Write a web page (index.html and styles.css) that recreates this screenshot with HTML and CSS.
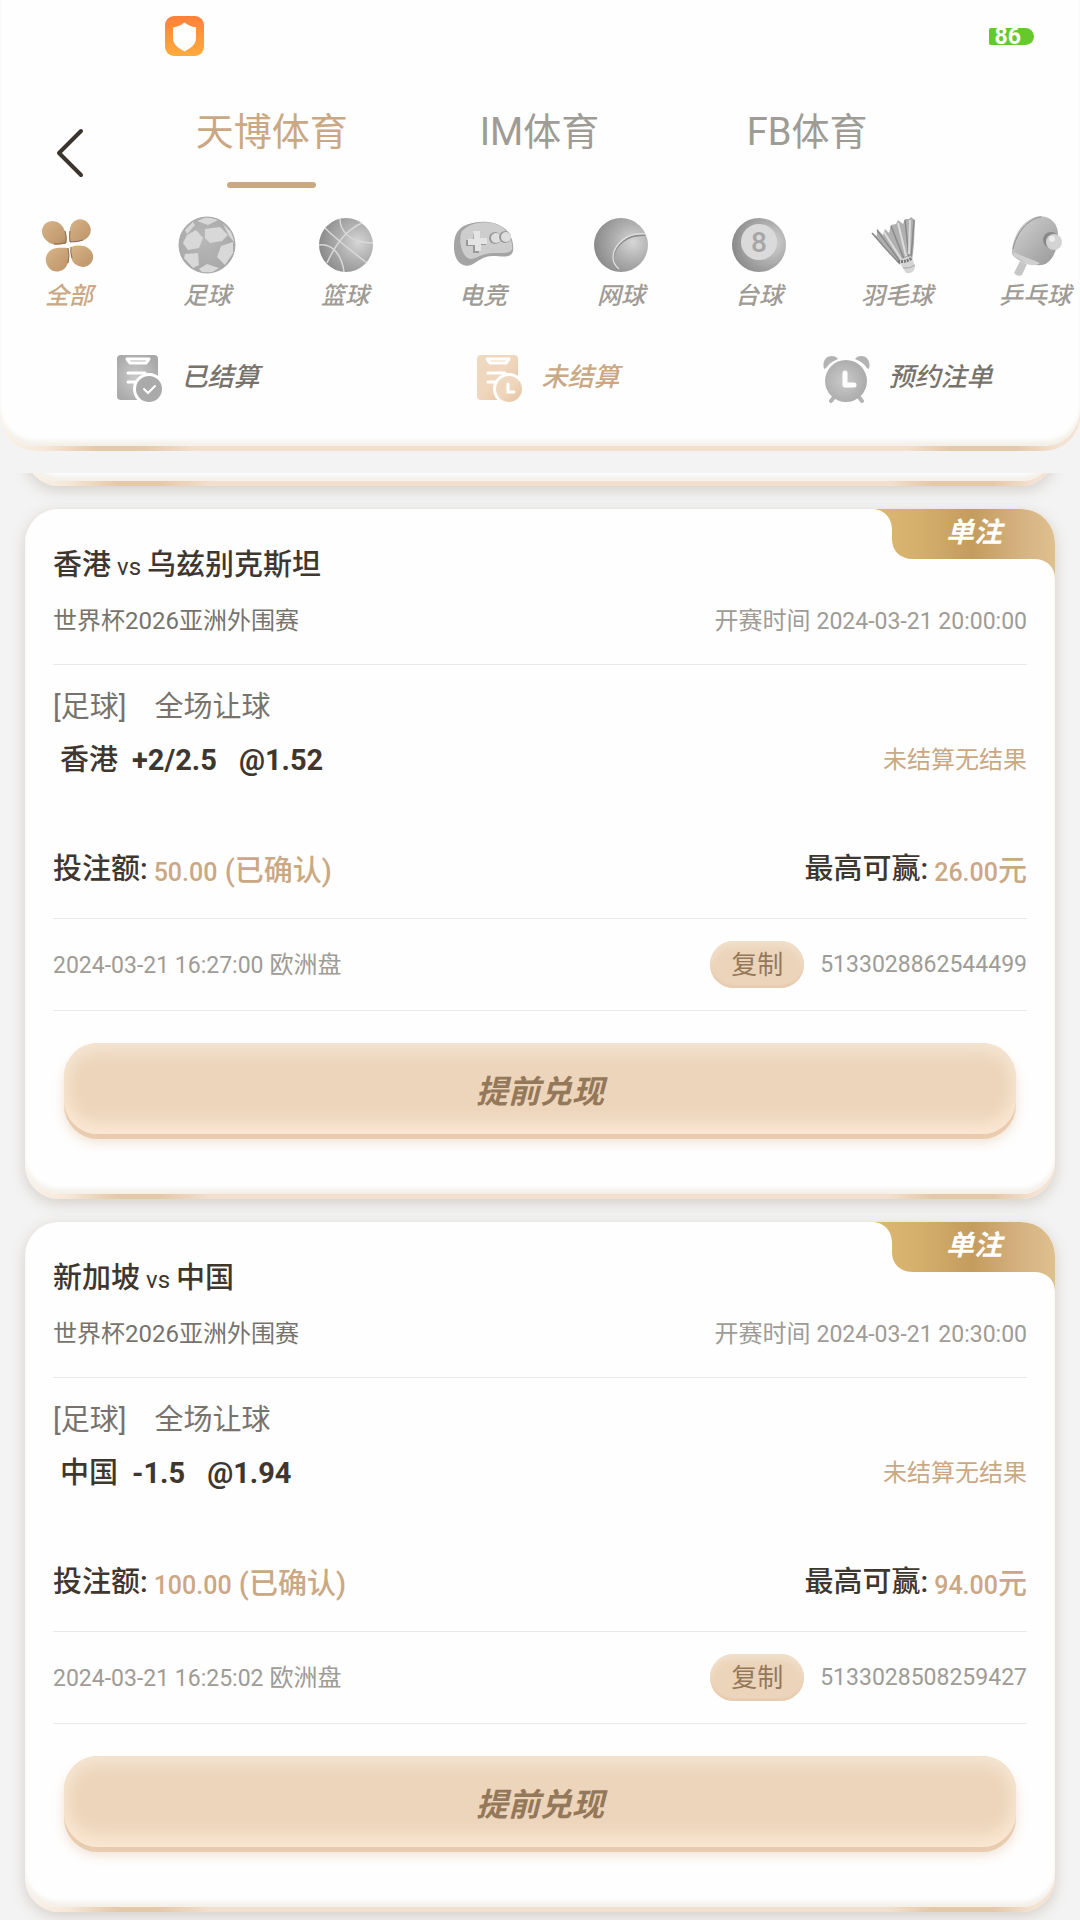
FILE: index.html
```html
<!DOCTYPE html>
<html lang="zh-CN">
<head>
    <meta charset="UTF-8">
    <meta name="viewport" content="width=device-width, initial-scale=1.0">
    <title>投注记录</title>
    <link rel="stylesheet" href="styles.css">
</head>
<body>

<!-- 公用渐变 -->
<svg class="defs" width="0" height="0" aria-hidden="true">
    <defs>
        <linearGradient id="shield" x1="0" y1="0" x2="0" y2="1">
            <stop offset="0" stop-color="#ff803a"/><stop offset="1" stop-color="#ffab3c"/>
        </linearGradient>
        <linearGradient id="petal" x1="0" y1="0" x2="1" y2="1">
            <stop offset="0" stop-color="#d8b48a"/><stop offset=".8" stop-color="#c19a6e"/><stop offset="1" stop-color="#a37d55"/>
        </linearGradient>
        <radialGradient id="ball" cx=".72" cy=".45" r=".75">
            <stop offset="0" stop-color="#d6d6d6"/><stop offset=".45" stop-color="#b0b0b0"/><stop offset="1" stop-color="#878787"/>
        </radialGradient>
        <radialGradient id="soccer" cx=".45" cy=".4" r=".6">
            <stop offset="0" stop-color="#b8b8b8"/><stop offset="1" stop-color="#a8a8a8"/>
        </radialGradient>
        <linearGradient id="grey" x1="0" y1="0" x2="1" y2="1">
            <stop offset="0" stop-color="#d4d4d4"/><stop offset="1" stop-color="#979797"/>
        </linearGradient>
        <radialGradient id="sheet" cx=".45" cy=".5" r=".6">
            <stop offset="0" stop-color="#cacaca"/><stop offset="1" stop-color="#a8a8a8"/>
        </radialGradient>
        <linearGradient id="sand" x1="0" y1="0" x2="1" y2="1">
            <stop offset="0" stop-color="#efd9c2"/><stop offset=".5" stop-color="#efd6bc"/><stop offset=".8" stop-color="#e8c9a8"/><stop offset="1" stop-color="#f6e6d6"/>
        </linearGradient>
        <linearGradient id="gold" x1="0" y1="0" x2="1" y2="0">
            <stop offset="0" stop-color="#dcb873"/><stop offset=".25" stop-color="#d4b06c"/><stop offset=".55" stop-color="#c49c5e"/><stop offset=".8" stop-color="#d5b180"/><stop offset="1" stop-color="#dfc08f"/>
        </linearGradient>
    </defs>
</svg>

<div class="page">
    <header class="top">
        <div class="system-bar">
            <svg class="shield" viewBox="0 0 40 40" aria-hidden="true">
                <rect width="39" height="40" rx="9" fill="url(#shield)"/>
                <path d="M19.500 6.500Q24.500 10.500 31 11.500V22C31 29 25 32.500 19.500 35.500C14 32.500 8 29 8 22V11.500Q14.500 10.500 19.500 6.500Z" fill="#fff"/>
            </svg>
            <span class="battery">86</span>
        </div>

        <nav class="nav">
            <button class="back" type="button" aria-label="返回">
                <svg viewBox="0 0 30 54" aria-hidden="true"><path d="M26 5L4 27L26 49" fill="none" stroke="#3c352d" stroke-width="4" stroke-linecap="round" stroke-linejoin="round"/></svg>
            </button>
            <a class="tab active" href="#tianbo">天博体育</a>
            <a class="tab" href="#im">IM体育</a>
            <a class="tab" href="#fb">FB体育</a>
        </nav>

        <div class="sports">
            <button class="sport active" type="button">
                <svg viewBox="0 0 60 60" aria-hidden="true">
                    <g fill="url(#petal)">
                        <path d="M27 27C21 29 13 30 8 25C2 20 1 12 7 7C13 3 20 5 24 11C27 16 28 22 27 27Z"/>
                        <path d="M31 26C30 20 30 14 32 9C35 3 43 1 48 6C53 10 53 18 48 22C44 26 37 26 31 26Z"/>
                        <path d="M29 32C30 38 31 44 28 49C25 56 15 58 10 52C5 46 6 38 12 34C17 31 23 32 29 32Z"/>
                        <path d="M32 31C38 29 44 29 49 32C55 36 56 43 51 48C46 53 38 51 34 46C31 41 32 36 32 31Z"/>
                    </g>
                    <path d="M15 28Q22 28 27 27Q28 21 26 15M31 15Q30 21 31 26Q39 26 44 24" fill="none" stroke="#8f6a45" stroke-width="1"/>
                    <path d="M29 32Q31 40 29 47M33 42Q31 36 32 31" fill="none" stroke="#8f6a45" stroke-width="1"/>
                </svg>
                <span>全部</span>
            </button>
            <button class="sport" type="button">
                <svg viewBox="0 0 60 60" aria-hidden="true">
                    <circle cx="30" cy="29" r="28" fill="url(#soccer)"/>
                    <g fill="#d8d8d8">
                        <path d="M10 19L19 14L26 22L22 32L11 34L6 27Z"/>
                        <path d="M28 13L43 11L51 19L45 25L33 27L28 22Z"/>
                        <path d="M44 30L56 26L56 37L48 49L40 41Z"/>
                        <path d="M8 38L21 37L22 49L16 52L7 42Z"/>
                        <path d="M22 53L30 48L42 52L34 57L25 56Z"/>
                        <path d="M8 14L16 6L18 9L10 18Z"/>
                        <path d="M20 5L30 1L41 4L31 9Z"/>
                        <path d="M46 8L54 16L58 27L52 20Z"/>
                    </g>
                    <circle cx="30" cy="29" r="28" fill="none" stroke="#a8a8a8"/>
                </svg>
                <span>足球</span>
            </button>
            <button class="sport" type="button">
                <svg viewBox="0 0 60 60" aria-hidden="true">
                    <circle cx="31" cy="29" r="27" fill="url(#ball)"/>
                    <path d="M47 7C31 14 20 29 12 47M10 12C23 25 38 36 52 47M25 3C25 15 35 27 58 27M4 29C17 27 27 39 29 56" fill="none" stroke="#d8d8d8" stroke-width="1.500"/>
                </svg>
                <span>篮球</span>
            </button>
            <button class="sport" type="button">
                <svg viewBox="0 0 60 60" aria-hidden="true">
                    <path d="M5 15C12 5 38 2 51 12C59 18 61 28 60 35C58 43 49 40 40 40C29 40 25 46 18 49C8 52 1 44 1 31C1 24 2 19 5 15Z" fill="#a4a4a4"/>
                    <path d="M9 15C20 4 39 4 49 11C57 18 60 27 59 33C57 38 50 37 41 37C29 37 23 43 18 43C8 42 5 23 9 15Z" fill="#cdcdcd"/>
                    <path d="M20 16H26V23H33V29H26V37H20V30H13V24H20Z" fill="#999"/>
                    <path d="M20 15H27V22H34V28H28V35H22V29H15V23H21Z" fill="#e4e4e4"/>
                    <circle cx="42" cy="22" r="6" fill="#999"/><circle cx="43" cy="22" r="5" fill="#dedede"/>
                    <circle cx="52" cy="21" r="6" fill="#999"/><circle cx="53" cy="21" r="5" fill="#dedede"/>
                </svg>
                <span>电竞</span>
            </button>
            <button class="sport" type="button">
                <svg viewBox="0 0 60 60" aria-hidden="true">
                    <circle cx="30" cy="29" r="27" fill="url(#ball)"/>
                    <path d="M54 19C36 18 23 29 22 43Q22 48 27 53" fill="none" stroke="#8a8a8a" stroke-width="2"/>
                    <path d="M54 18C36 16 22 29 22 42Q22 48 28 53" fill="none" stroke="#dedede" stroke-width="1.500"/>
                </svg>
                <span>网球</span>
            </button>
            <button class="sport" type="button">
                <svg viewBox="0 0 60 60" aria-hidden="true">
                    <circle cx="30" cy="29" r="27" fill="url(#ball)"/>
                    <circle cx="30" cy="26" r="18" fill="#dadada"/>
                    <text x="30" y="36" class="eight">8</text>
                </svg>
                <span>台球</span>
            </button>
            <button class="sport" type="button">
                <svg viewBox="0 0 60 60" aria-hidden="true">
                    <path d="M5 17L10 20L10 13L16 19L18 13L22 17L24 9L29 8L31 4L36 8L38 3L42 3L44 1L48 4L47 28L45 46L33 48L19 33Z" fill="#b0b0b0"/>
                    <path d="M5 17L19 33L33 48M10 14L32 44M24 10L37 43M38 4L42 42M47 4L44 43" fill="none" stroke="#8a8a8a" stroke-width="1.500"/>
                    <path d="M17 16L34 43M31 7L39 40M43 4L42 38" fill="none" stroke="#dcdcdc" stroke-width="2"/>
                    <path d="M31 44L44 40L48 50C48 56 43 58 39 57Z" fill="#d5d5d5"/>
                    <path d="M31 45Q38 47 45 42" fill="none" stroke="#777" stroke-width="3" stroke-dasharray="2 1"/>
                    <path d="M36 52Q43 53 48 49" fill="none" stroke="#a5a5a5"/>
                </svg>
                <span>羽毛球</span>
            </button>
            <button class="sport" type="button">
                <svg viewBox="0 0 60 60" aria-hidden="true">
                    <path d="M15 45L22 48L17 59Q13 61 9 57Z" fill="#c6c6c6"/>
                    <path d="M7 35C8 18 20 1 36 0C47 1 54 9 53 21C53 34 46 48 37 49C28 50 12 46 7 38Z" fill="url(#grey)"/>
                    <path d="M8 36L35 47Q30 51 22 48L9 40Z" fill="#d0d0d0"/>
                    <path d="M8 33C11 18 22 3 36 1" fill="none" stroke="#8f8f8f"/>
                    <circle cx="46" cy="24" r="8" fill="#888"/>
                    <circle cx="49" cy="26" r="8" fill="#d3d3d3"/><circle cx="47" cy="23" r="3" fill="#ececec"/>
                </svg>
                <span>乒乓球</span>
            </button>
        </div>

        <div class="filters">
            <button class="filter" type="button">
                <svg viewBox="0 0 48 48" aria-hidden="true">
                    <rect x="1" width="41" height="45" rx="4" fill="url(#sheet)"/>
                    <path d="M11 4L14 8H30L33 4Z" fill="none" stroke="#fff" stroke-width="3" stroke-linejoin="round"/>
                    <path d="M12 18H29M12 27H20" stroke="#fff" stroke-width="3" stroke-linecap="round"/>
                    <circle cx="33" cy="34" r="15" fill="#fff" stroke="#fff" stroke-width="2"/><circle cx="33" cy="34" r="13" fill="#aaa"/>
                    <path d="M28 34L32 38L39 31" fill="none" stroke="#fff" stroke-width="2" stroke-linecap="round"/>
                </svg>
                <span>已结算</span>
            </button>
            <button class="filter active" type="button">
                <svg viewBox="0 0 48 48" aria-hidden="true">
                    <rect x="1" width="41" height="45" rx="4" fill="url(#sand)"/>
                    <path d="M11 4L14 8H30L33 4Z" fill="none" stroke="#fff" stroke-width="3" stroke-linejoin="round"/>
                    <path d="M12 18H29M12 27H20" stroke="#fff" stroke-width="3" stroke-linecap="round"/>
                    <circle cx="33" cy="34" r="15" fill="#fff" stroke="#fff" stroke-width="2"/><circle cx="33" cy="34" r="13" fill="url(#sand)"/>
                    <path d="M32 29V37H38" fill="none" stroke="#fff" stroke-width="3" stroke-linecap="round"/>
                </svg>
                <span>未结算</span>
            </button>
            <button class="filter" type="button">
                <svg viewBox="0 0 48 48" aria-hidden="true">
                    <path d="M1 14C-1 6 3 1 9 1Q13 1 15 4Q7 7 3 13ZM46 14C48 6 44 1 38 1Q34 1 32 4Q40 7 44 13Z" fill="#b3b3b3"/>
                    <path d="M12 41L8 46M35 41L39 46" stroke="#b3b3b3" stroke-width="4" stroke-linecap="round"/>
                    <circle cx="23" cy="26" r="21" fill="url(#sheet)"/>
                    <path d="M22 18V30H31" fill="none" stroke="#fff" stroke-width="5" stroke-linecap="round" stroke-linejoin="round"/>
                </svg>
                <span>预约注单</span>
            </button>
        </div>
    </header>

    <main class="list">
        <!-- 上一张注单，只露出底边 -->
        <article class="card card-passed"><div class="card-body"></div></article>

        <article class="card">
            <div class="card-body">
                <div class="badge">
                    <svg viewBox="0 0 183 70" aria-hidden="true"><path d="M0 0H183V70C183 58 175 50 162 50H41C28 50 20 42 20 30V21C20 9 12 0 0 0Z" fill="url(#gold)"/></svg>
                    <span>单注</span>
                </div>
                <h2 class="match">香港 <small>vs</small> 乌兹别克斯坦</h2>
                <div class="row league">
                    <span>世界杯2026亚洲外围赛</span>
                    <span class="kickoff">开赛时间 <time>2024-03-21 20:00:00</time></span>
                </div>
                <div class="play"><span>[足球]</span><span>全场让球</span></div>
                <div class="row pick">
                    <div class="choice"><span>香港</span><b>+2/2.5</b><b class="odds">@1.52</b></div>
                    <span class="result">未结算无结果</span>
                </div>
                <div class="row money">
                    <div>投注额: <em><i>50.00</i> (已确认)</em></div>
                    <div>最高可赢: <em><i>26.00</i>元</em></div>
                </div>
                <div class="row order">
                    <span><time>2024-03-21 16:27:00</time> 欧洲盘</span>
                    <div class="order-no"><button class="copy" type="button">复制</button><span>5133028862544499</span></div>
                </div>
                <button class="cash-out" type="button">提前兑现</button>
            </div>
        </article>

        <article class="card">
            <div class="card-body">
                <div class="badge">
                    <svg viewBox="0 0 183 70" aria-hidden="true"><path d="M0 0H183V70C183 58 175 50 162 50H41C28 50 20 42 20 30V21C20 9 12 0 0 0Z" fill="url(#gold)"/></svg>
                    <span>单注</span>
                </div>
                <h2 class="match">新加坡 <small>vs</small> 中国</h2>
                <div class="row league">
                    <span>世界杯2026亚洲外围赛</span>
                    <span class="kickoff">开赛时间 <time>2024-03-21 20:30:00</time></span>
                </div>
                <div class="play"><span>[足球]</span><span>全场让球</span></div>
                <div class="row pick">
                    <div class="choice"><span>中国</span><b>-1.5</b><b class="odds">@1.94</b></div>
                    <span class="result">未结算无结果</span>
                </div>
                <div class="row money">
                    <div>投注额: <em><i>100.00</i> (已确认)</em></div>
                    <div>最高可赢: <em><i>94.00</i>元</em></div>
                </div>
                <div class="row order">
                    <span><time>2024-03-21 16:25:02</time> 欧洲盘</span>
                    <div class="order-no"><button class="copy" type="button">复制</button><span>5133028508259427</span></div>
                </div>
                <button class="cash-out" type="button">提前兑现</button>
            </div>
        </article>
    </main>
</div>

</body>
</html>
```
FILE: styles.css
```css
* {
    box-sizing: border-box;
}
body {
    margin: 0;
    background-color: #f3f3f3;
    color: #3e372f;
    font-family: Roboto, "Noto Sans CJK SC", sans-serif;
    font-size: 24px;
}
button {
    padding: 0;
    border: 0;
    background: none;
    color: inherit;
    font: inherit;
    cursor: pointer;
}
a {
    color: inherit;
    text-decoration: none;
}
svg {
    display: block;
}
time {
    font-size: 23px;
    line-height: 1;
}
.defs {
    position: absolute;
}
.page {
    display: flex;
    flex-direction: column;
    height: 100vh;
}

/* 顶部 */
.top,
.card {
    background: linear-gradient(90deg, #faf2ea 0, #f6e8da 4%, #e5c8a8 9%, #e5c8a8 13%, #f2dfcd 18%, #f2dfcd 84%, #e5c8a8 88%, #e5c8a8 94%, #f4e2d2 98%);
    padding-bottom: 5px;
}
.top {
    flex: none;
    border-radius: 0 0 36px 36px;
    overflow: hidden;
    position: relative;
    display: flex;
    flex-direction: column;
    padding: 0 0 48px;
    z-index: 0;
}
/* 白色面板，盖住底色只留下沿 */
.top::before {
    content: "";
    position: absolute;
    inset: 0 0 5px;
    z-index: -1;
    border-radius: 0 0 36px 36px;
    background-color: #fefefe;
    box-shadow: inset 0 -6px 4px -1px #f4f0e9;
}
.system-bar {
    display: flex;
    justify-content: space-between;
    align-items: center;
    height: 72px;
    padding: 0 46px 0 165px;
}
.shield {
    width: 40px;
    height: 40px;
}
.battery {
    padding: 0 13px 0 6px;
    border-radius: 2px 9px 9px 2px;
    background-color: #66c92b;
    color: #fff;
    font-size: 23px;
    font-weight: 700;
    line-height: 17px;
}
.nav {
    display: grid;
    grid-template-columns: 138px repeat(3, 1fr) 139px;
    padding-top: 32px;
}
.back {
    align-self: end;
    padding: 0 0 8px 55px;
}
.back svg {
    width: 30px;
    height: 54px;
}
.tab {
    display: flex;
    flex-direction: column;
    align-items: center;
    gap: 22px;
    color: #9f9b95;
    font-size: 38px;
    line-height: 56px;
}
.tab::after {
    content: "";
    width: 89px;
    height: 6px;
    border-radius: 3px;
}
.tab.active::after {
    background-color: #cba884;
}
.sports {
    display: flex;
    margin-top: 28px;
    overflow: hidden;
}
.sport {
    flex: 0 0 138px;
    display: flex;
    flex-direction: column;
    align-items: center;
    gap: 4px;
    color: #9f9b95;
    font-style: italic;
    font-weight: 500;
    line-height: 32px;
}
.sport svg {
    width: 60px;
    height: 60px;
    overflow: visible;
}
.eight {
    fill: #a6a6a6;
    font-size: 28px;
    font-style: normal;
    font-weight: 500;
    text-anchor: middle;
}
.filters {
    display: grid;
    grid-template-columns: repeat(3, 1fr);
    margin-top: 43px;
}
.filter {
    display: flex;
    justify-content: center;
    align-items: flex-start;
    gap: 17px;
    padding-left: 16px;
    color: #77736c;
    font-size: 26px;
    font-style: italic;
    font-weight: 500;
    line-height: 44px;
}
.filter svg {
    width: 48px;
    height: 48px;
}
.tab.active,
.sport.active,
.filter.active {
    color: #cba884;
}

/* 注单列表 */
.list {
    flex: 1;
    display: flex;
    flex-direction: column;
    gap: 23px;
    margin-top: 22px;
    padding: 0 25px;
    overflow: hidden;
}
.card {
    flex: none;
    border-radius: 34px;
    box-shadow: 0 4px 14px rgba(120, 100, 80, .25);
}
.card-passed {
    margin-top: -87px;
}
.card-passed .card-body {
    height: 95px;
}
.card-body {
    position: relative;
    padding: 36px 28px 55px;
    border-radius: 34px;
    overflow: hidden;
    background-color: #fefefe;
    box-shadow: inset 0 -6px 4px -1px #f4f0e9;
}
.badge {
    position: absolute;
    top: 0;
    right: 0;
    width: 183px;
    height: 70px;
}
.badge span {
    position: absolute;
    top: 0;
    left: 74px;
    color: #fff;
    font-size: 28px;
    font-style: italic;
    font-weight: 700;
    line-height: 48px;
}
.row {
    display: flex;
    justify-content: space-between;
    align-items: center;
}
.match {
    display: flex;
    align-items: baseline;
    gap: 6px;
    margin: 0;
    font-size: 29px;
    font-weight: 500;
    line-height: 40px;
}
.match small {
    font-size: 24px;
    font-weight: 400;
    line-height: 1;
}
.league {
    margin-top: 18px;
    padding-bottom: 25px;
    border-bottom: 1px solid #e9e9e9;
    color: #77736c;
    line-height: 36px;
}
.kickoff {
    color: #9f9b95;
}
.play {
    display: flex;
    gap: 28px;
    margin-top: 22px;
    color: #77736c;
    font-size: 29px;
    line-height: 40px;
}
.pick {
    margin-top: 13px;
    padding-left: 7px;
    line-height: 40px;
}
.choice {
    display: flex;
    gap: 14px;
    font-size: 29px;
    font-weight: 500;
}
.choice b {
    font-weight: 700;
}
.choice .odds {
    margin-left: 8px;
}
.result {
    color: #cba884;
}
.money {
    margin-top: 69px;
    padding-bottom: 29px;
    border-bottom: 1px solid #e9e9e9;
    font-size: 29px;
    font-weight: 500;
    line-height: 40px;
}
.money div {
    display: flex;
    align-items: center;
    gap: 6px;
    height: 40px;
}
.money em {
    padding-top: 3px;
    color: #cba884;
    font-style: normal;
}
.money i {
    font-size: 25px;
    font-style: normal;
    line-height: 1;
}
.order {
    padding: 22px 0;
    border-bottom: 1px solid #e9e9e9;
    color: #9f9b95;
    line-height: 46px;
}
.order-no {
    display: flex;
    align-items: center;
    gap: 16px;
    height: 47px;
    font-size: 23px;
}
.copy {
    width: 94px;
    height: 47px;
    border-radius: 24px;
    background-color: #ecd4bb;
    box-shadow: inset 0 7px 7px -2px #f1e0cb, inset 0 -3px 2px #e8ccb0;
    color: #94785a;
    font-size: 26px;
    line-height: 44px;
}
.cash-out {
    display: block;
    width: calc(100% - 22px);
    height: 91px;
    margin: 32px 11px 5px;
    border-radius: 34px;
    background-color: #edd5bc;
    box-shadow: inset 0 12px 16px -4px #f4e4d2, inset 0 -12px 18px -2px #fbe8d4, inset 0 0 18px #f4e1c8, 0 5px 0 #e9ccb0, 0 8px 12px rgba(220, 180, 140, .4);
    color: #94785a;
    font-size: 32px;
    font-style: italic;
    font-weight: 700;
}
```
